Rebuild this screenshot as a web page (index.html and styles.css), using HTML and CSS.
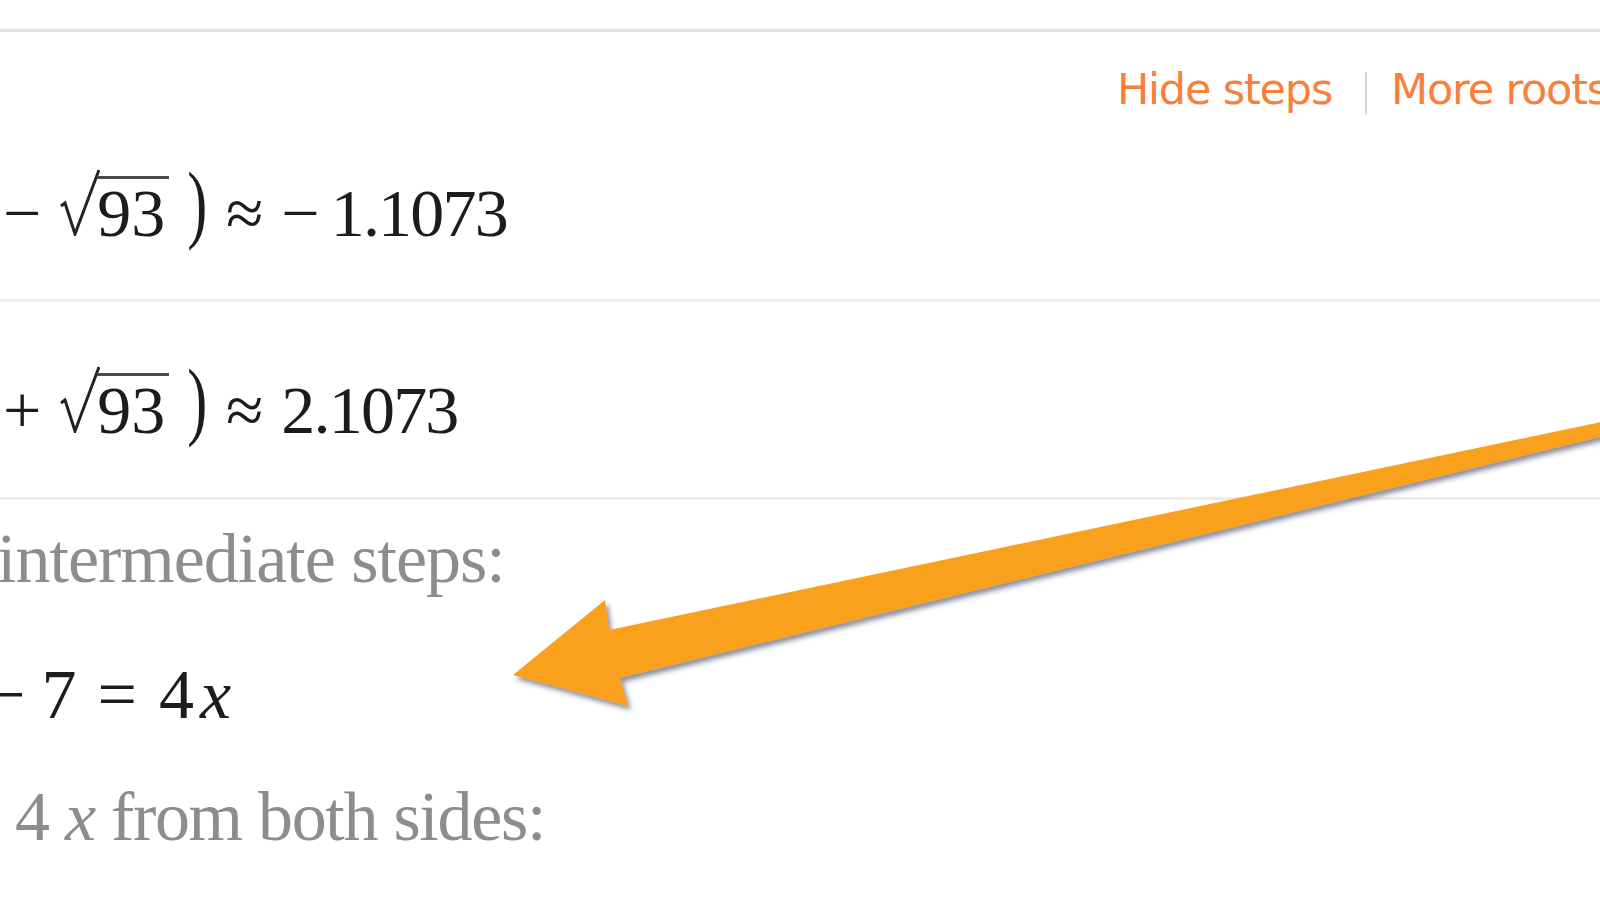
FILE: index.html
```html
<!DOCTYPE html>
<html lang="en">
<head>
    <meta charset="UTF-8">
    <title>Real solutions - steps</title>
    <link rel="stylesheet" href="styles.css">
</head>
<body>
    <div class="pod">
        <div class="result first">
            <div class="links">
                <a class="link" href="#">Hide steps</a>
                <span class="sep"></span>
                <a class="link" href="#">More roots</a>
            </div>
            <div class="expr">
                <span class="op">&minus;</span>
                <svg class="radical" width="40" height="68" viewBox="0 0 40 68"><path d="M1 38 L5 35 L15 66 L39 2" fill="none" stroke="#222" stroke-width="3" stroke-linejoin="miter"/></svg>
                <span class="rad">93</span>
                <span class="paren">)</span>
                <span class="approx">&asymp;</span>
                <span class="op neg">&minus;</span>
                <span class="num">1.1073</span>
            </div>
        </div>
        <div class="result second">
            <div class="expr">
                <span class="op">+</span>
                <svg class="radical" width="40" height="68" viewBox="0 0 40 68"><path d="M1 38 L5 35 L15 66 L39 2" fill="none" stroke="#222" stroke-width="3" stroke-linejoin="miter"/></svg>
                <span class="rad">93</span>
                <span class="paren">)</span>
                <span class="approx">&asymp;</span>
                <span class="num pos">2.1073</span>
            </div>
        </div>
        <div class="steps">
            <p class="note first-note">intermediate steps:</p>
            <p class="step"><span class="op cut">&minus;</span><span class="d7">7</span><span class="eq">=</span><span class="d4">4</span><i class="var">x</i></p>
            <p class="note last-note">4 <i>x</i> from both sides:</p>
        </div>
    </div>

    <!-- callout arrow drawn over the pod -->
    <svg class="arrow" width="1600" height="900" viewBox="0 0 1600 900">
        <defs>
            <filter id="shadow" x="-10%" y="-10%" width="120%" height="130%">
                <feDropShadow dx="3" dy="4" stdDeviation="2.5" flood-color="#2a3550" flood-opacity="0.55"/>
            </filter>
        </defs>
        <polygon points="513,675 605,600 609,630 1620,418 1620,432 620,678 628,706" fill="#f9a01f" filter="url(#shadow)"/>
    </svg>
</body>
</html>
```

FILE: styles.css
```css
body {
    margin: 0;
    width: 1600px;
    height: 900px;
    overflow: hidden;
    background: #fff;
    position: relative;
}
.pod {
    width: 1640px;
    margin-top: 29px;
    border-top: 3px solid #e3e3e3;
    font-family: "Liberation Serif", "Times New Roman", serif;
    color: #1c1c1c;
}
.result {
    border-bottom: 3px solid #f3efe6;
}
.result.first {
    padding: 32px 0 52px;
}
.result.second {
    padding: 62px 0 53px;
    border-bottom-color: #eeeddf;
}
.links {
    display: flex;
    justify-content: flex-end;
    align-items: center;
    padding-right: 32px;
    height: 50px;
    margin-bottom: 53px;
    font-family: "DejaVu Sans", Verdana, sans-serif;
    font-size: 43px;
    letter-spacing: -1.2px;
}
.link {
    color: #f8803a;
    text-decoration: none;
}
.sep {
    display: inline-block;
    height: 43px;
    margin: 8px 24px 0 33px;
    border-left: 2px solid #d6d6d6;
}
.expr {
    display: flex;
    align-items: baseline;
    height: 80px;
    line-height: 80px;
    font-size: 68px;
}
.op {
    margin-left: 3px;
}
.radical {
    margin-left: 19px;
    align-self: flex-end;
    margin-bottom: 11px;
}
.rad {
    border-top: 3px solid #4a4a4a;
    padding-right: 4px;
    margin-left: -3px;
    line-height: 1;
}
.paren {
    font-size: 86px;
    margin-left: 14px;
    transform: scaleX(0.7) translateY(-4px);
}
.approx {
    margin-left: 14px;
}
.op.neg {
    margin-left: 18px;
}
.num {
    margin-left: 11px;
    letter-spacing: -1.8px;
}
.num.pos {
    margin-left: 18px;
}
.steps {
    padding-top: 19px;
}
.steps p {
    margin: 0;
    line-height: 80px;
    white-space: nowrap;
}
.note {
    font-size: 70px;
    color: #8d8d8d;
    letter-spacing: -1px;
}
.first-note {
    margin-left: -3px !important;
}
.step {
    font-size: 70px;
    margin-top: 56px !important;
    display: flex;
    align-items: baseline;
}
.op.cut {
    margin-left: -14px;
}
.d7 {
    margin-left: 16px;
}
.eq {
    margin-left: 21px;
}
.d4 {
    margin-left: 22px;
}
.var {
    margin-left: 6px;
}
.last-note {
    margin-top: 42px !important;
    margin-left: 15px !important;
    letter-spacing: -1.3px;
}
.arrow {
    position: absolute;
    top: 0;
    left: 0;
    pointer-events: none;
}
```
